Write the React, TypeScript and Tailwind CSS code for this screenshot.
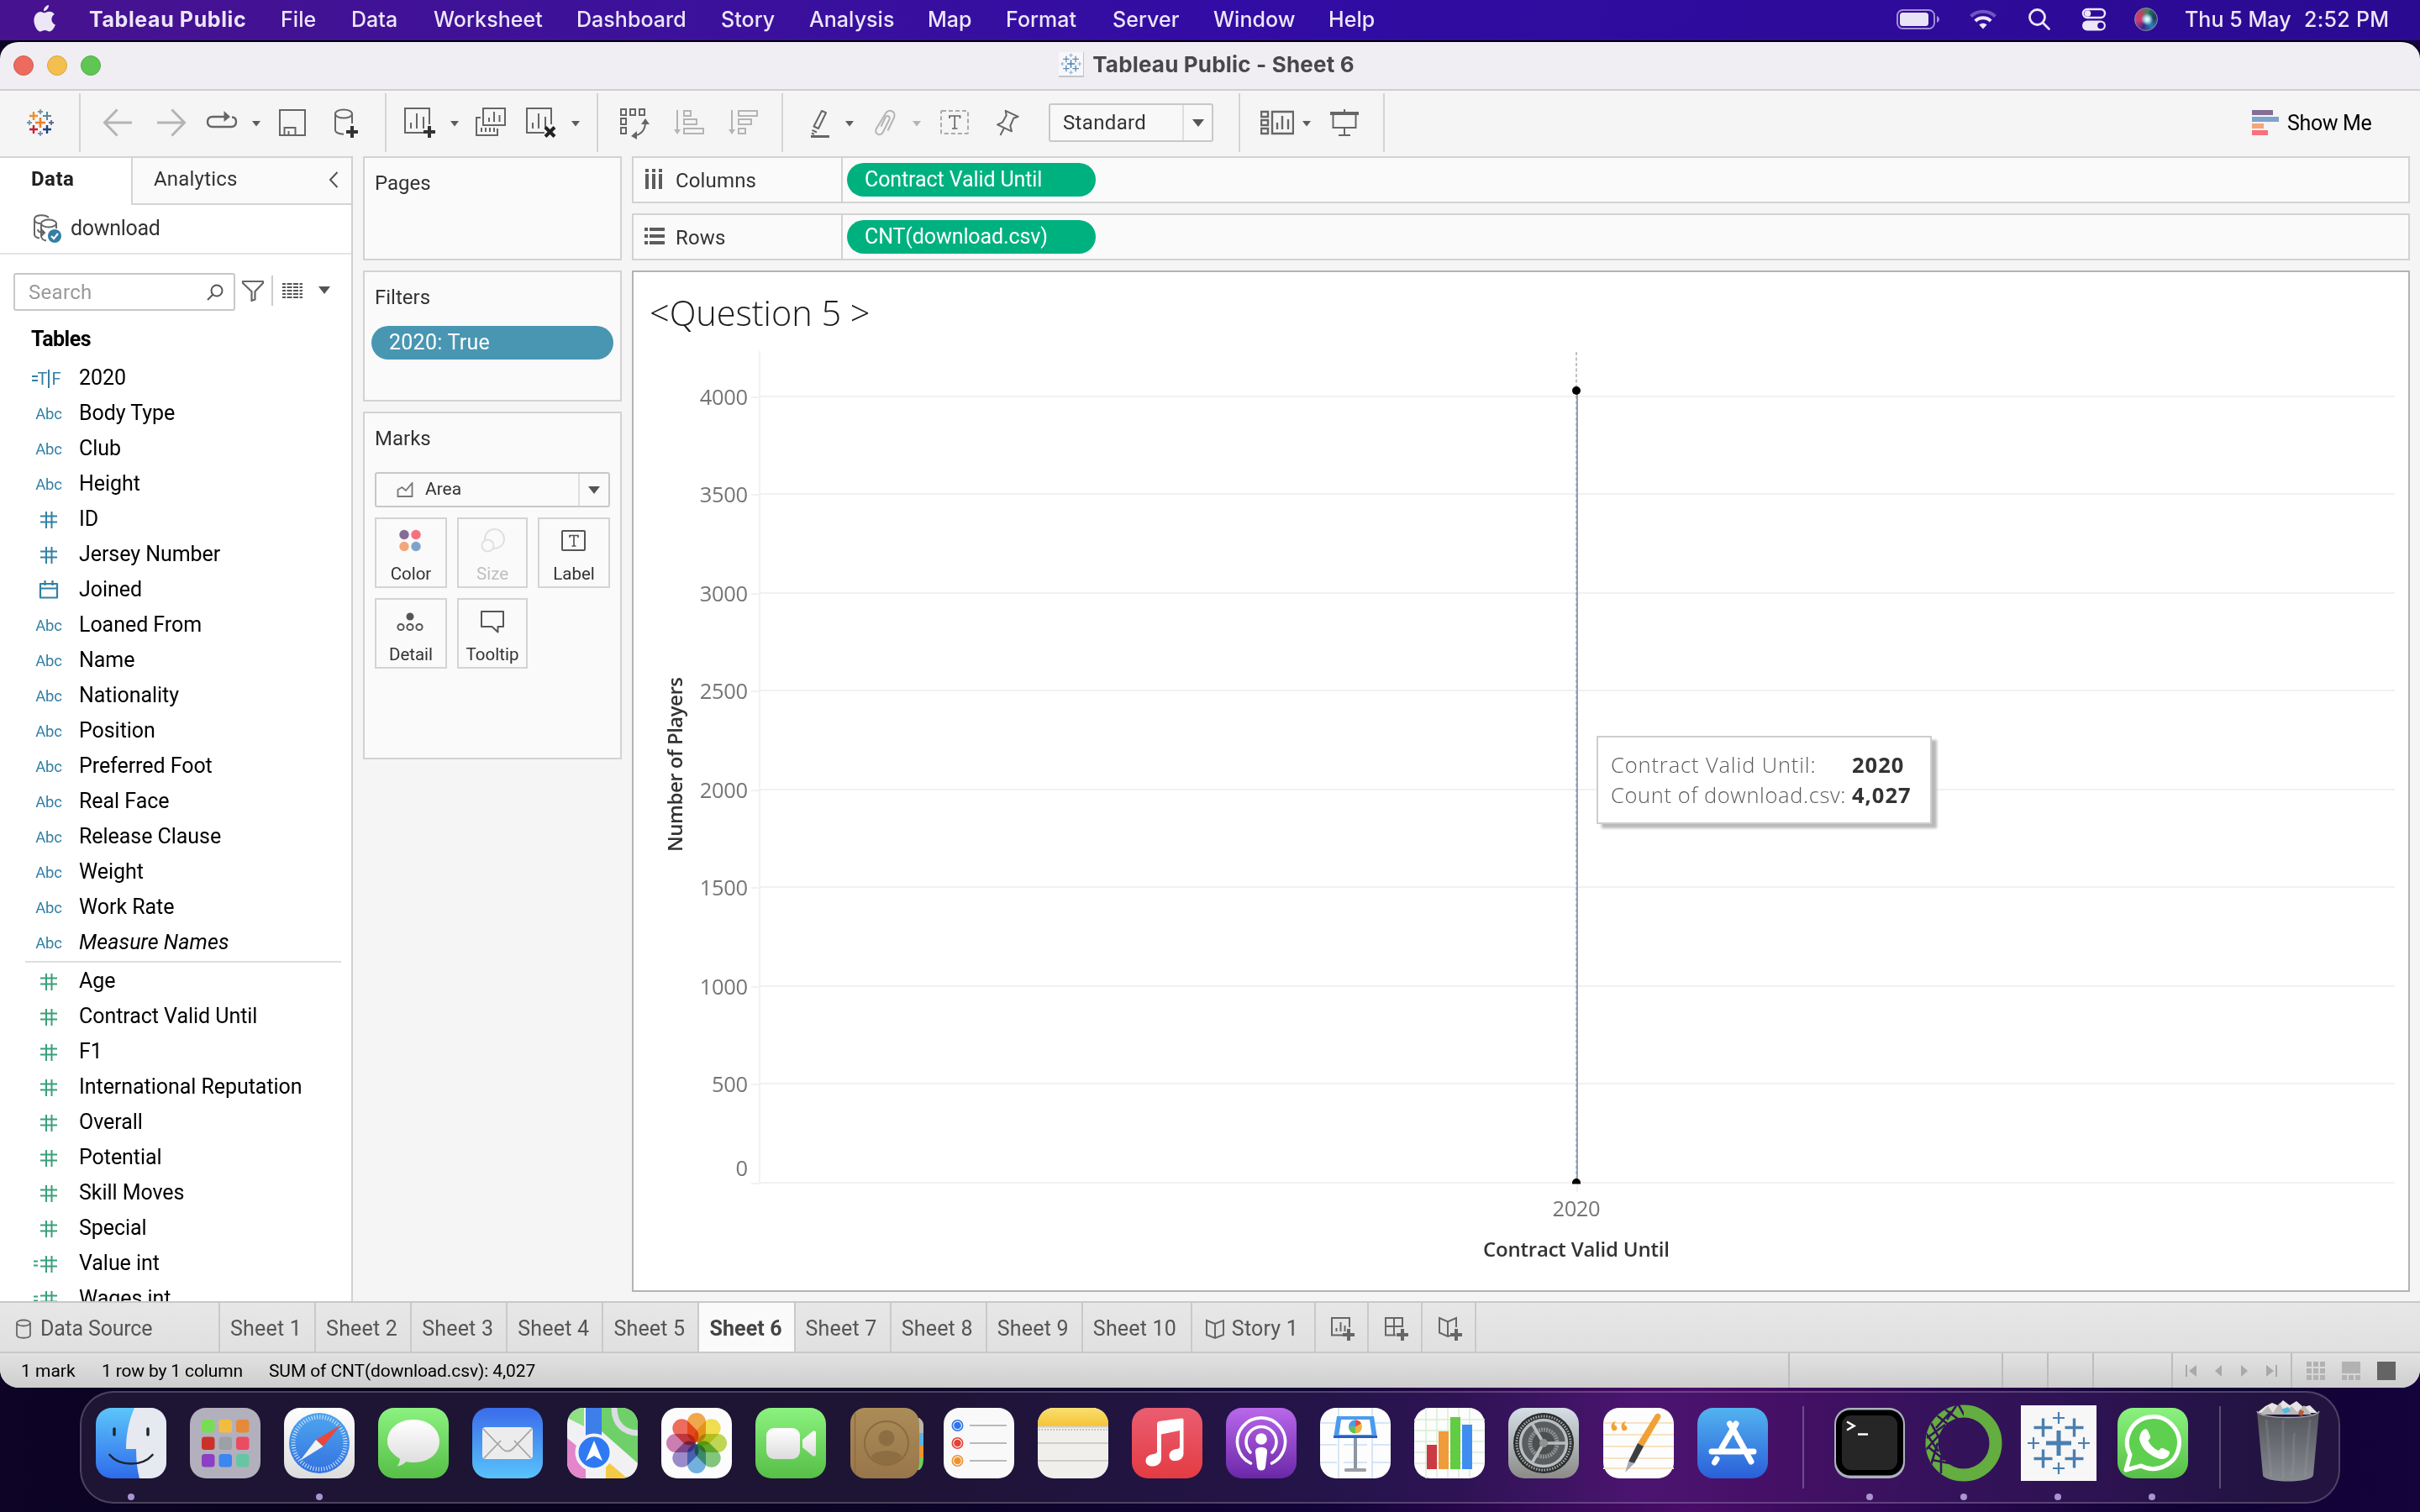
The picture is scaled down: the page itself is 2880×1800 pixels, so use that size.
import React from "react";

type IconProps = { className?: string; children: React.ReactNode };

/* 40×40 line icon used across the toolbar */
function Tool({ className = "", children }: IconProps) {
  return (
    <svg viewBox="0 0 40 40" className={"h-10 w-10 shrink-0 " + className} fill="none" stroke="#666" strokeWidth="2">
      {children}
    </svg>
  );
}

function Caret({ className = "", light = false }: { className?: string; light?: boolean }) {
  return (
    <svg viewBox="0 0 14 10" className={"mt-0.5 h-2.5 w-3.5 shrink-0 " + className}>
      <path d="M2 2h10L7 8.500z" fill={light ? "#b4b4b4" : "#5c5c5c"} />
    </svg>
  );
}

function Sep({ className = "" }: { className?: string }) {
  return <div className={"h-[70px] w-0.5 shrink-0 bg-[#d4d4d4] " + className} />;
}

function Plus({ x, y, r, w, c }: { x: number; y: number; r: number; w: number; c: string }) {
  return <path d={`M${x - r} ${y}h${2 * r}M${x} ${y - r}v${2 * r}`} stroke={c} strokeWidth={w} fill="none" />;
}

/* ---------------------------------------------------------------- menu bar */

const menus: [string, string][] = [
  ["File", "w-[84px]"],
  ["Data", "w-[98px]"],
  ["Worksheet", "w-[170px]"],
  ["Dashboard", "w-[172px]"],
  ["Story", "w-[105px]"],
  ["Analysis", "w-[141px]"],
  ["Map", "w-[93px]"],
  ["Format", "w-[127px]"],
  ["Server", "w-[120px]"],
  ["Window", "w-[137px]"],
  ["Help", "w-[60px]"],
];

function MenuBar() {
  return (
    <header className="flex h-12 items-center bg-gradient-to-r from-[#47128f] via-[#320ca4] to-[#2b0a92] pb-0.5 text-[25px] font-medium leading-none tracking-[0.05px] text-[#ece6f7]">
      <svg viewBox="0 0 26 32" className="ml-10 h-8 w-[26px] -translate-y-px" fill="#ece6f7">
        <path d="M18 0c.3 3.400-2.600 7-6 7.200C11.600 4 14.800.4 18 0zM12.900 9.300c1.400 0 3-1.600 5.900-1.600 2.300 0 4.700 1.200 6.100 3.400-5.300 3.200-4.300 10.300 1 12.400-1.500 4-4.100 8-6.900 8-2.200 0-2.900-1.400-5.600-1.400-2.600 0-3.600 1.400-5.600 1.400C4.500 31.500.4 24.400.4 18.300c0-6.200 3.800-10.400 7.900-10.400 2 0 3.500 1.400 4.600 1.400z" />
      </svg>
      <span className="ml-10 w-[228px] whitespace-nowrap font-bold tracking-[0.6px]">Tableau Public</span>
      {menus.map(([label, w]) => (
        <span key={label} className={w}>
          {label}
        </span>
      ))}
      <svg viewBox="0 0 52 24" className="ml-auto h-6 w-[52px]" fill="none">
        <rect x="1" y="1" width="44" height="22" rx="6.500" stroke="#a28fd6" strokeWidth="2" />
        <rect x="4" y="4" width="34" height="16" rx="3.500" fill="#e9e4f5" />
        <path d="M48 8c4 1.500 4 6.500 0 8z" fill="#a28fd6" />
      </svg>
      <svg viewBox="0 0 32 24" className="ml-[35px] h-6 w-8" fill="none" strokeWidth="4.200">
        <path d="M1.500 8.500C9.500.800 22.500.800 30.500 8.500" stroke="#6e55bf" />
        <path d="M6.800 14c5-5 13.400-5 18.400 0" stroke="#ece6f7" />
        <path d="M16 23.500l-4.600-5c2.600-2.300 6.600-2.300 9.200 0z" fill="#ece6f7" />
      </svg>
      <svg viewBox="0 0 28 28" className="ml-[37px] h-7 w-7" fill="none" stroke="#ece6f7" strokeWidth="2.800" strokeLinecap="round">
        <circle cx="11.500" cy="11.500" r="9" />
        <path d="M18.500 18.500l7 7" />
      </svg>
      <svg viewBox="0 0 30 28" className="ml-[36px] h-7 w-[30px]">
        <rect x="2" y="2" width="26" height="10" rx="5" fill="none" stroke="#ece6f7" strokeWidth="2.400" />
        <circle cx="7.500" cy="7" r="3.800" fill="#ece6f7" />
        <rect x="1" y="15.500" width="28" height="12" rx="6" fill="#ece6f7" />
        <circle cx="23" cy="21.500" r="3.800" fill="#2b0a92" />
      </svg>
      <span className="ml-[33px] h-[28px] w-[28px] rounded-full border border-[#8d8fa8] bg-[radial-gradient(circle_at_55%_50%,#ffffff_0,#a8e0ee_16%,transparent_38%),conic-gradient(from_20deg,#2f6f5e,#1c3a5c,#2d7fb4,#3a2a86,#d03a77,#b8475a,#2d8c66)]" />
      <span className="ml-[32px] w-[142px] whitespace-nowrap">Thu 5 May</span>
      <span className="w-[138px] whitespace-nowrap tracking-[0.3px]">2:52 PM</span>
    </header>
  );
}

/* --------------------------------------------------------------- title bar */

function TitleBar() {
  return (
    <div className="relative flex h-[58px] items-center justify-center border-b-2 border-[#cfced5] bg-[#f0eef3] pb-[3px]">
      <div className="absolute left-4 top-4 flex gap-4">
        <span className="h-6 w-6 rounded-full border border-[#d8584e] bg-[#ed6a5f]" />
        <span className="h-6 w-6 rounded-full border border-[#d9a441] bg-[#f5bf4f]" />
        <span className="h-6 w-6 rounded-full border border-[#51ad44] bg-[#61c554]" />
      </div>
      <svg viewBox="0 0 30 30" className="mr-2.5 h-[30px] w-[30px] border-b-2 border-r border-[#c4c4c8] bg-[#f8f8fa]">
        <Plus x={15} y={15} r={5} w={1.600} c="#4a7fb0" />
        {[
          [9, 9],
          [21, 9],
          [9, 21],
          [21, 21],
        ].map(([x, y]) => (
          <Plus key={`${x}${y}`} x={x} y={y} r={4} w={1.400} c="#5b8cb8" />
        ))}
        {[
          [15, 4],
          [15, 26],
          [4, 15],
          [26, 15],
        ].map(([x, y]) => (
          <Plus key={`${x}${y}`} x={x} y={y} r={2.500} w={1.200} c="#8fb0cf" />
        ))}
      </svg>
      <span className="mr-2 text-[26px] font-bold tracking-[0.18px] text-[#49474c]">Tableau Public - Sheet 6</span>
    </div>
  );
}

/* ----------------------------------------------------------------- toolbar */

function Toolbar() {
  return (
    <div className="flex h-[78px] shrink-0 items-center bg-[#f5f5f5] pb-0.5">
      <svg viewBox="0 0 40 40" className="ml-7 h-10 w-10 shrink-0">
        <Plus x={20} y={20} r={6} w={2.600} c="#eb8130" />
        <Plus x={12} y={12} r={5} w={2.400} c="#eb912c" />
        <Plus x={28} y={12} r={5} w={2} c="#59879b" />
        <Plus x={12} y={28} r={5} w={2.400} c="#c72035" />
        <Plus x={28} y={28} r={5} w={2.400} c="#1f457e" />
        <Plus x={20} y={7} r={3} w={1.800} c="#7099a6" />
        <Plus x={20} y={33} r={3} w={1.800} c="#8289b8" />
        <Plus x={7} y={20} r={3} w={1.800} c="#7099a6" />
        <Plus x={33} y={20} r={3} w={1.800} c="#5c6692" />
      </svg>
      <Sep className="ml-[26px]" />
      <Tool className="ml-6">
        <path d="M37 20H5M19.500 4.500L4.500 20l15 15.500" stroke="#b4b4b4" strokeWidth="3" />
      </Tool>
      <Tool className="ml-6">
        <path d="M3 20h32M20.500 4.500L35.500 20l-15 15.500" stroke="#b4b4b4" strokeWidth="3" />
      </Tool>
      <Tool className="ml-5">
        <path d="M13 13H9c-4 0-6 2.500-6 6s2 6 6 6h22c4 0 6-2.500 6-6s-2-5.500-5-5.500M13 13h14" strokeWidth="2.400" />
        <path d="M22.500 6l7.500 7-7.500 6z" fill="#666" stroke="none" />
      </Tool>
      <Caret className="ml-3.5" />
      <Tool className="ml-4">
        <path d="M5 5h30v30H5zM10.500 35V26h13v9M15.500 35v-5" />
      </Tool>
      <Tool className="ml-6">
        <ellipse cx="17" cy="9.500" rx="10" ry="5" />
        <path d="M7 9.500V29c0 2.500 4 4.500 10 4.800M27 9.500V21" />
        <path d="M27 24v14M20 31h14" stroke="#333" strokeWidth="4" />
      </Tool>
      <Sep className="ml-[26px]" />
      <Tool className="ml-5">
        <path d="M24 32H2V3h29v19M9 27v-7M16 27V9M24 27V13" />
        <path d="M31 24v14M24 31h14" stroke="#333" strokeWidth="4" />
      </Tool>
      <Caret className="ml-3.5" />
      <Tool className="ml-4">
        <path d="M11 3h26v20H11zM18 19v-5M24 19V7M30.500 19v-8M8 14H3v21h25v-8M9 31v-5M14 31v-5M19 31v-5M24 31v-5" />
      </Tool>
      <Tool className="ml-5">
        <path d="M24 32H3V3h29v19M10 27v-7M17 27V9M25 27V13" />
        <path d="M25 25.500l11 11M36 25.500l-11 11" stroke="#222" strokeWidth="4" />
      </Tool>
      <Caret className="ml-3.5" />
      <Sep className="ml-[18px]" />
      <Tool className="ml-[23px]">
        <path d="M4 4h6v7H4zM15 4h6v7h-6zM26 4h6v7h-6zM4 15h6v7H4zM4 26h6v7H4zM33 20c0 8-5 14.500-13 15.500" />
        <path d="M33 15l5 7H28zM16 36l7-6v10z" fill="#666" stroke="none" />
      </Tool>
      <Tool className="ml-[25px]">
        <g stroke="#b4b4b4">
          <path d="M6 5v26M14 6h8v6h-8zM14 16h15v6H14zM14 27h23v6H14z" />
          <path d="M2 28h8l-4 6z" fill="#b4b4b4" stroke="none" />
        </g>
      </Tool>
      <Tool className="ml-[25px]">
        <g stroke="#b4b4b4">
          <path d="M6 5v26M14 6h22v6H14zM14 16h15v6H14zM14 27h8v6h-8z" />
          <path d="M2 28h8l-4 6z" fill="#b4b4b4" stroke="none" />
        </g>
      </Tool>
      <Sep className="ml-[25px]" />
      <Tool className="ml-6">
        <path d="M22 6l5 2.200L18 27l-5.500-2.500zM10.500 28.800l5.500 2.700M10 32.500l3 1.400" strokeLinejoin="round" />
        <path d="M9 36.500h22" strokeWidth="3" />
      </Tool>
      <Caret className="ml-2" />
      <Tool className="ml-[15px]">
        <path d="M23.500 29.500L31 14c3-8-7-11-10-5L10 27c-3 7 5 10 8 4l7.500-15c1.500-4-3.500-5.500-5-2L15.500 24.500" stroke="#b4b4b4" />
      </Tool>
      <Caret className="ml-[11px]" light />
      <Tool className="ml-[18px]">
        <rect x="4" y="6" width="32" height="27" rx="1" strokeDasharray="5 3" stroke="#aaa" />
        <path d="M14 15v-3h12.500v3M20.200 12v15M17 27h6.500" strokeWidth="1.700" />
      </Tool>
      <Tool className="ml-6">
        <path d="M16.700 5.800l15 7-5.500 2L22.300 24l1.700 6.300-17-8 6-2.600 4.700-8.400zM15 26.300L10.500 35" strokeLinejoin="round" />
      </Tool>
      <div className="ml-7 flex h-[46px] w-[196px] shrink-0 items-center rounded-[3px] border-2 border-[#c8c8c8] bg-[#f8f8f8]">
        <span className="w-[157px] pl-[15px] text-[24px] tracking-[0.35px] text-[#333]">Standard</span>
        <span className="flex h-full flex-1 items-center justify-center border-l-2 border-[#dedede]">
          <svg viewBox="0 0 14 9" className="h-[9px] w-3.5">
            <path d="M0 0h14L7 9z" fill="#555" />
          </svg>
        </span>
      </div>
      <Sep className="ml-[30px]" />
      <Tool className="ml-6">
        <path d="M1 7h8v6H1zM1 17h8v6H1zM1 27h8v6H1zM14 7h25v26H14zM20 28v-8M26 28V12M33 28V16" strokeWidth="2.400" />
      </Tool>
      <Caret className="ml-2" />
      <Tool className="ml-[18px]">
        <path d="M3 9h34" strokeWidth="4" />
        <path d="M6.500 10v16h27V10M20 4v4M20 26v8M13 35h14" />
      </Tool>
      <Sep className="ml-[26px]" />
      <div className="ml-auto mr-[58px] flex items-center gap-2.5">
        <div className="flex w-8 flex-col gap-0.5">
          <span className="h-1.5 w-[25px] bg-[#866d96]" />
          <span className="h-1.5 w-8 bg-[#7fa3cb]" />
          <span className="h-1.5 w-[14px] bg-[#f4a67a]" />
          <span className="h-1.5 w-[19px] bg-[#f8707e]" />
        </div>
        <span className="w-[100px] whitespace-nowrap pt-0.5 text-[25px] tracking-[-0.35px] text-black">Show Me</span>
      </div>
    </div>
  );
}

/* ----------------------------------------------------------------- sidebar */

type Kind = "tf" | "abc" | "num" | "date" | "calc";

const dimensions: [string, Kind][] = [
  ["2020", "tf"],
  ["Body Type", "abc"],
  ["Club", "abc"],
  ["Height", "abc"],
  ["ID", "num"],
  ["Jersey Number", "num"],
  ["Joined", "date"],
  ["Loaned From", "abc"],
  ["Name", "abc"],
  ["Nationality", "abc"],
  ["Position", "abc"],
  ["Preferred Foot", "abc"],
  ["Real Face", "abc"],
  ["Release Clause", "abc"],
  ["Weight", "abc"],
  ["Work Rate", "abc"],
  ["Measure Names", "abc"],
];

const measures: [string, Kind][] = [
  ["Age", "num"],
  ["Contract Valid Until", "num"],
  ["F1", "num"],
  ["International Reputation", "num"],
  ["Overall", "num"],
  ["Potential", "num"],
  ["Skill Moves", "num"],
  ["Special", "num"],
  ["Value int", "calc"],
  ["Wages int", "calc"],
];

function FieldIcon({ kind }: { kind: Kind }) {
  if (kind === "abc") return <span className="pt-1 text-[18.500px] tracking-[-0.2px]">Abc</span>;
  if (kind === "tf")
    return (
      <span className="-ml-1.5 flex items-center pt-0.5 text-[20px] leading-none">
        <svg viewBox="0 0 7 10" className="h-2.5 w-[7px]" stroke="currentColor" strokeWidth="2">
          <path d="M0 2h7M0 7h7" />
        </svg>
        T<span className="ml-px mr-0.5 h-[22px] w-0.5 bg-current" />F
      </span>
    );
  if (kind === "date")
    return (
      <svg viewBox="0 0 24 24" className="h-6 w-6" fill="none" stroke="currentColor" strokeWidth="2.200">
        <path d="M2 5h20v16.500H2zM2 10.500h20M7.500 1v6M16.500 1v6" strokeLinejoin="round" />
      </svg>
    );
  return (
    <svg viewBox="0 0 40 24" className="h-6 w-10" fill="none" stroke="currentColor" strokeWidth="2">
      <path d="M10 8.500h20M10 15.500h20M17 3v20M23.500 3v20" />
      {kind === "calc" && <path d="M2 9.500h5M2 14.500h5" />}
    </svg>
  );
}

function Field({ name, kind, italic = false }: { name: string; kind: Kind; italic?: boolean }) {
  return (
    <li className="flex h-[42px] shrink-0 items-center">
      <span className="ml-8 flex w-[52px] justify-center">
        <FieldIcon kind={kind} />
      </span>
      <span className={"ml-2.5 whitespace-nowrap text-[25px] text-black " + (italic ? "italic tracking-[0.1px]" : "tracking-[-0.05px]")}>{name}</span>
    </li>
  );
}

function Sidebar() {
  return (
    <aside className="flex w-[420px] shrink-0 flex-col overflow-hidden border-r-2 border-[#d0d0d0] bg-white">
      <div className="flex h-[58px] shrink-0 border-t-2 border-[#d4d4d4] text-[24px]">
        <div className="w-[156px] pl-[37px] pt-[7px] font-bold tracking-[0.5px] text-[#222]">Data</div>
        <div className="flex flex-1 items-start justify-between border-b-2 border-l-2 border-[#d4d4d4] bg-[#fafafa] pl-[25px] pr-[15px] pt-[7px] tracking-[0.2px] text-[#333]">
          Analytics
          <svg viewBox="0 0 12 20" className="mt-[9px] h-5 w-3" fill="none" stroke="#555" strokeWidth="2">
            <path d="M10.500 1L2 10l8.500 9" />
          </svg>
        </div>
      </div>
      <div className="flex h-[59px] shrink-0 items-center border-b-2 border-[#e4e4e4] pb-0.5 pl-[38px]">
        <svg viewBox="0 0 36 36" className="h-9 w-9" fill="none" stroke="#666" strokeWidth="2">
          <path d="M20 5C16 1 3 1 3 7v18c0 2.500 3 4 6 4.500" />
          <path d="M3 8c1 3 4 4 7 4" />
          <ellipse cx="20" cy="12" rx="9" ry="4.500" fill="#fff" />
          <path d="M11 12v15c0 3 3 5 6 5.500M29 12v6" />
          <path d="M7 19c0 3 2 4 7 4m-2.500-3.500L15 23l-3.500 3.500" />
          <circle cx="27" cy="27" r="8" fill="#337ea4" stroke="none" />
          <path d="M23 27l3 3.200 5-6.200" stroke="#fff" strokeWidth="2.200" />
        </svg>
        <span className="ml-2.5 text-[25px] tracking-[-0.3px] text-[#333]">download</span>
      </div>
      <div className="flex shrink-0 items-center pl-4 pt-[22px]">
        <div className="flex h-[45px] w-[264px] items-center rounded-[3px] border-2 border-[#c8c8c8] pl-4 pr-3">
          <span className="text-[24px] tracking-[0.3px] text-[#999]">Search</span>
          <svg viewBox="0 0 20 20" className="ml-auto h-5 w-5" fill="none" stroke="#555" strokeWidth="2">
            <circle cx="12" cy="8" r="6.500" />
            <path d="M7.500 12.500L1 19" />
          </svg>
        </div>
        <svg viewBox="0 0 28 28" className="ml-[7px] h-7 w-7 -translate-y-0.5" fill="none" stroke="#666" strokeWidth="2.200" strokeLinejoin="round">
          <path d="M2 3h24v2L16.500 15v9.500l-4 1.500V15L2 5z" />
        </svg>
        <span className="ml-2 h-9 w-0.5 -translate-y-0.5 bg-[#ccc]" />
        <svg viewBox="0 0 24 20" className="ml-[11px] h-5 w-6 -translate-y-0.5" stroke="#555" strokeWidth="2.200">
          <path d="M0 2h24M0 6h24M0 10h24M0 14h24M0 18h24" strokeDasharray="4 1.500 6 1.500 6 1.500 6 0" />
        </svg>
        <svg viewBox="0 0 14 9" className="ml-[19px] h-[9px] w-3.5 -translate-y-0.5">
          <path d="M0 0h14L7 9z" fill="#555" />
        </svg>
      </div>
      <h2 className="flex h-[59px] shrink-0 items-center pl-[37px] pt-[8px] text-[25px] font-bold tracking-[-0.5px] text-black">Tables</h2>
      <ul className="flex shrink-0 flex-col text-[#3280a5]">
        {dimensions.map(([n, k]) => (
          <Field key={n} name={n} kind={k} italic={n === "Measure Names"} />
        ))}
      </ul>
      <div className="ml-[30px] mr-3 mt-px h-0.5 shrink-0 bg-[#dedede]" />
      <ul className="mt-px flex h-[403px] shrink-0 flex-col overflow-hidden text-[#3aa079]">
        {measures.map(([n, k]) => (
          <Field key={n} name={n} kind={k} />
        ))}
      </ul>
    </aside>
  );
}

/* ------------------------------------------------------------- shelf cards */

function Card({ title, className, children }: { title: string; className: string; children?: React.ReactNode }) {
  return (
    <section className={"shrink-0 border-2 border-[#d2d2d2] bg-[#fafafa] text-[#333] " + className}>
      <h3 className="px-3 text-[24px] leading-[30px]">{title}</h3>
      {children}
    </section>
  );
}

function MarkButton({ label, dim = false, children }: { label: string; dim?: boolean; children: React.ReactNode }) {
  return (
    <div
      className={
        "flex h-[84px] flex-col items-center border-2 border-[#d4d4d4] pt-2.5 text-[20.500px] leading-6 " + (dim ? "text-[#bfbfbf]" : "text-[#333]")
      }
    >
      <svg viewBox="0 0 36 32" className="mb-[11px] h-8 w-9 shrink-0" fill="none" stroke={dim ? "#e0e0e0" : "#555"} strokeWidth="2">
        {children}
      </svg>
      {label}
    </div>
  );
}

function Cards() {
  return (
    <div className="ml-3 flex w-[308px] shrink-0 flex-col">
      <Card title="Pages" className="h-[124px] pt-[15px]" />
      <Card title="Filters" className="mt-3 h-[156px] pt-[15px]">
        <div className="mx-2 mt-[19px] flex h-10 items-center rounded-full bg-[#4996b2] pl-[21px] text-[25px] tracking-[0.25px] text-white">2020: True</div>
      </Card>
      <Card title="Marks" className="mt-3 h-[414px] pt-[15px]">
        <div className="mx-3 mt-[25px] flex h-[42px] items-center rounded-[3px] border-2 border-[#c8c8c8]">
          <svg viewBox="0 0 20 18" className="ml-[24px] h-[18px] w-5" fill="none" stroke="#777" strokeWidth="1.800">
            <path d="M1.500 17V9l5-3 4.500 4 7.500-9v16z" />
          </svg>
          <span className="ml-[14px] text-[21px]">Area</span>
          <span className="ml-auto flex h-full w-9 items-center justify-center border-l-2 border-[#dedede]">
            <svg viewBox="0 0 14 9" className="h-[9px] w-3.5">
              <path d="M0 0h14L7 9z" fill="#555" />
            </svg>
          </span>
        </div>
        <div className="mx-3 mt-3 grid grid-cols-[86px_84px_86px] gap-3">
          <MarkButton label="Color">
            <g stroke="none">
              <circle cx="10" cy="8.500" r="5.700" fill="#866d96" />
              <circle cx="24" cy="8.500" r="5.700" fill="#f8707e" />
              <circle cx="10" cy="22.500" r="5.700" fill="#f4a67a" />
              <circle cx="24" cy="22.500" r="5.700" fill="#7fa3cb" />
            </g>
          </MarkButton>
          <MarkButton label="Size" dim>
            <circle cx="20.500" cy="13.500" r="11.500" />
            <circle cx="12.500" cy="21.500" r="7" fill="#fafafa" />
          </MarkButton>
          <MarkButton label="Label">
            <rect x="4" y="4" width="27" height="23" rx="1" />
            <path d="M13 12v-2.500h10V12M18 10v12M15.500 22h5" strokeWidth="1.700" />
          </MarkButton>
          <MarkButton label="Detail">
            <circle cx="17" cy="10" r="4.500" fill="#555" stroke="none" />
            <circle cx="6" cy="22.500" r="3.600" />
            <circle cx="17" cy="22.500" r="3.600" />
            <circle cx="28" cy="22.500" r="3.600" />
          </MarkButton>
          <MarkButton label="Tooltip">
            <path d="M5 4h26v18h-6.500v6.500L17.500 22H5z" strokeLinejoin="round" />
          </MarkButton>
        </div>
      </Card>
    </div>
  );
}

function Shelf({ label, pill, icon, className = "" }: { label: string; pill: string; icon: React.ReactNode; className?: string }) {
  return (
    <div className={"flex h-14 shrink-0 items-center border-2 border-[#d2d2d2] bg-[#fafafa] " + className}>
      <div className="flex h-full w-[249px] items-center border-r-2 border-[#d2d2d2] pl-[13px] pt-px text-[24px] tracking-[0.15px] text-[#333]">
        <svg viewBox="0 0 24 24" className="mr-[13px] h-6 w-6 -translate-y-0.5" fill="#5c5c5c">
          {icon}
        </svg>
        {label}
      </div>
      <div className="ml-[5px] flex h-10 w-[296px] items-center rounded-full bg-[#00b180] pl-[21px] text-[25px] tracking-[-0.1px] text-white">{pill}</div>
    </div>
  );
}

/* ------------------------------------------------------------------- chart */

const yTicks: [string, number][] = [
  ["4000", 148],
  ["3500", 264],
  ["3000", 382],
  ["2500", 498],
  ["2000", 616],
  ["1500", 732],
  ["1000", 850],
  ["500", 966],
];

function Viz() {
  return (
    <div className="relative mt-3 h-[1216px] shrink-0 border-2 border-[#b3b3b3] bg-white font-['Open_Sans',sans-serif]">
      <h1 className="absolute left-[19px] top-[18px] whitespace-nowrap text-[41.500px] font-light leading-[60px] tracking-[-0.05px] text-[#1c1c1c]">{"<Question 5 >"}</h1>
      <svg viewBox="0 0 2112 1212" className="h-[1212px] w-[2112px]" fill="none">
        <path d="M150 94V1084" stroke="#f1f1f1" strokeWidth="2" />
        {yTicks.map(([t, y]) => (
          <g key={t}>
            <path d={`M150 ${y}H2096M140 ${y + 1}h10`} stroke="#f1f1f1" strokeWidth="2" />
            <text x="136" y={y + 10} textAnchor="end" fontSize="25.500" fill="#757575" textLength={t.length * 14.300}>
              {t}
            </text>
          </g>
        ))}
        <path d="M140 1085h10M150 1084H2096M1123 1085v10" stroke="#f1f1f1" strokeWidth="2" />
        <text x="136" y="1076" textAnchor="end" fontSize="25.500" fill="#757575">
          0
        </text>
        <path d="M1123 142V1083" stroke="#86a8cf" strokeWidth="2" />
        <path d="M1122 95V1083" stroke="#8a8a8a" strokeOpacity=".7" strokeWidth="1.500" strokeDasharray="4 2.500" />
        <circle cx="1122" cy="141" r="5" fill="#000" />
        <path d="M1117 1084a5 5 0 0 1 10 0v1.500h-10z" fill="#000" />
        <text x="1122" y="1124" textAnchor="middle" fontSize="25.500" fill="#757575" textLength="57">
          2020
        </text>
        <text x="1122" y="1172" textAnchor="middle" fontSize="24" fill="#333" textLength="222" className="font-semibold">
          Contract Valid Until
        </text>
        <text transform="translate(58 586) rotate(-90)" textAnchor="middle" fontSize="24" fill="#333" textLength="208" className="font-semibold">
          Number of Players
        </text>
      </svg>
      <div className="absolute left-[1146px] top-[552px] h-[105px] w-[399px] border-2 border-[#cdcdcd] bg-white pl-[15px] pt-[14px] text-[25.500px] leading-[36px] shadow-[6px_5px_3px_#b9b9b9]">
        <div className="flex">
          <span className="w-[287px] whitespace-nowrap font-light tracking-[0.87px] text-[#5c5c5c]">Contract Valid Until:</span>
          <b className="tracking-[1px] text-[#333]">2020</b>
        </div>
        <div className="flex">
          <span className="w-[287px] whitespace-nowrap font-light tracking-[0.63px] text-[#5c5c5c]">Count of download.csv:</span>
          <b className="tracking-[1px] text-[#333]">4,027</b>
        </div>
      </div>
    </div>
  );
}

/* -------------------------------------------------------------- sheet tabs */

function BookIcon({ className = "" }: { className?: string }) {
  return (
    <svg viewBox="0 0 24 26" className={"h-[26px] w-6 " + className} fill="none" stroke="#666" strokeWidth="2">
      <path d="M2 3l10 4 10-4v17l-10 4-10-4zM12 7v17" />
    </svg>
  );
}

function NewTab({ className, children }: { className: string; children: React.ReactNode }) {
  return (
    <div className={"flex items-center justify-center border-r-2 border-[#c9c9c9] pl-1 pt-[3px] " + className}>
      <svg viewBox="0 0 30 30" className="h-[30px] w-[30px]" fill="none" stroke="#666" strokeWidth="2">
        {children}
        <path d="M22 15v14M15 22h14" strokeWidth="4" />
      </svg>
    </div>
  );
}

const sheets = [1, 2, 3, 4, 5, 6, 7, 8, 9];

function SheetTabs() {
  return (
    <div className="flex h-[62px] shrink-0 border-b-2 border-t-2 border-[#c8c8c8] bg-gradient-to-b from-[#e7e7e7] to-[#e0e0e0] text-[25px] tracking-[0.2px] text-[#555]">
      <div className="flex w-[262px] items-center border-r-2 border-[#c9c9c9] pl-[18px] pt-[3px]">
        <svg viewBox="0 0 20 24" className="h-6 w-5" fill="none" stroke="#666" strokeWidth="1.800">
          <ellipse cx="10" cy="5" rx="8" ry="3.500" />
          <path d="M2 5v14c0 5 16 5 16 0V5" />
        </svg>
        <span className="ml-[10px] tracking-[-0.2px]">Data Source</span>
      </div>
      {sheets.map((n) => (
        <div
          key={n}
          className={
            "flex w-[114.100px] items-center whitespace-nowrap border-r-2 border-[#c9c9c9] pl-3 pt-[3px] " +
            (n === 6 ? "bg-[#fafafa] font-bold tracking-[0.1px] text-[#444]" : "")
          }
        >
          Sheet {n}
        </div>
      ))}
      <div className="flex w-[130px] items-center border-r-2 border-[#c9c9c9] pl-3 pt-[3px]">Sheet 10</div>
      <div className="flex w-[147px] items-center border-r-2 border-[#c9c9c9] pl-[15px] pt-[3px]">
        <BookIcon />
        <span className="ml-2 whitespace-nowrap">Story 1</span>
      </div>
      <NewTab className="w-[63px]">
        <path d="M16 22.500H2V2h21v11M7.500 18v-4M12.500 18V7M17.500 18v-7" />
      </NewTab>
      <NewTab className="w-16">
        <path d="M14 22.500H2V2h20v11M2 12h20M12 2v20" />
      </NewTab>
      <NewTab className="w-16">
        <path d="M15 23l-3 1-10-4.500V2l10 4.500L22 2v11M12 6.500V24" />
      </NewTab>
    </div>
  );
}

function StatusBar() {
  return (
    <div className="flex h-[41px] shrink-0 items-stretch bg-gradient-to-b from-[#e2e2e2] to-[#cecece] text-[21px] leading-[42px] text-black">
      <span className="ml-[25px] w-[96px]">1 mark</span>
      <span className="w-[199px] tracking-[-0.15px]">1 row by 1 column</span>
      <span className="w-[1808px] tracking-[-0.1px]">SUM of CNT(download.csv): 4,027</span>
      <span className="w-[254px] border-l-2 border-[#bdbdbd]" />
      <span className="w-[54px] border-l-2 border-[#bdbdbd]" />
      <span className="w-[54px] border-l-2 border-[#bdbdbd]" />
      <span className="w-[94px] border-l-2 border-[#bdbdbd]" />
      <span className="flex w-[142px] items-center justify-between border-l-2 border-[#bdbdbd] pl-[15px] pr-[16px]">
        <svg viewBox="0 0 14 14" className="h-3.5 w-3.5" fill="#a9a9a9">
          <path d="M0 0h2v14H0zM13 0v14L4 7z" />
        </svg>
        <svg viewBox="0 0 10 14" className="h-3.5 w-2.5" fill="#a9a9a9">
          <path d="M9 0v14L1 7z" />
        </svg>
        <svg viewBox="0 0 10 14" className="h-3.5 w-2.5" fill="#a9a9a9">
          <path d="M1 0v14l8-7z" />
        </svg>
        <svg viewBox="0 0 14 14" className="h-3.5 w-3.5" fill="#a9a9a9">
          <path d="M12 0h2v14h-2zM1 0v14l9-7z" />
        </svg>
      </span>
      <span className="flex flex-1 items-center gap-5 border-l-2 border-[#bdbdbd] pl-[17px]">
        <svg viewBox="0 0 22 22" className="h-[22px] w-[22px]" fill="#b2b2b2">
          <path d="M0 0h6v6H0zM8 0h6v6H8zM16 0h6v6h-6zM0 8h6v6H0zM8 8h6v6H8zM16 8h6v6h-6zM0 16h6v6H0zM8 16h6v6H8zM16 16h6v6h-6z" />
        </svg>
        <svg viewBox="0 0 22 22" className="h-[22px] w-[22px]" fill="#b2b2b2">
          <path d="M0 0h22v14H0zM0 16h6v6H0zM8 16h6v6H8zM16 16h6v6h-6z" />
        </svg>
        <span className="h-[22px] w-[22px] bg-[#646464]" />
      </span>
    </div>
  );
}

/* -------------------------------------------------------------------- dock */

function Grad({ id, a, b }: { id: string; a: string; b: string }) {
  return (
    <linearGradient id={id} x1="0" y1="0" x2="0" y2="1">
      <stop offset="0" stopColor={a} />
      <stop offset="1" stopColor={b} />
    </linearGradient>
  );
}

function App84({ dot = false, children }: { dot?: boolean; children: React.ReactNode }) {
  return (
    <div className="relative flex h-full w-[112.100px] shrink-0 justify-center pt-[18px]">
      <svg viewBox="0 0 84 84" className="h-[84px] w-[84px] overflow-visible">
        {children}
      </svg>
      {dot && <span className="absolute bottom-[2px] left-[52px] h-2 w-2 rounded-full bg-[#a994cf]" />}
    </div>
  );
}

function Tile({ fill }: { fill: string }) {
  return <rect width="84" height="84" rx="19" fill={fill} />;
}

const petals: [number, string][] = [
  [0, "#f29a2e"],
  [45, "#f0dc32"],
  [90, "#b4d337"],
  [135, "#6dbf6a"],
  [180, "#5aa5dc"],
  [225, "#8a79c4"],
  [270, "#c76aa5"],
  [315, "#ee5340"],
];

const pads: [number, number, string][] = [
  [14, 14, "#77dd55"],
  [34.500, 14, "#f2bd3f"],
  [55, 14, "#e58a38"],
  [14, 34.500, "#cc3128"],
  [34.500, 34.500, "#9aa0a6"],
  [55, 34.500, "#ea4c62"],
  [14, 55, "#8c3fc4"],
  [34.500, 55, "#3b86f0"],
  [55, 55, "#66c6a4"],
];

function Dock() {
  return (
    <nav className="mx-[95px] mt-1 flex h-[134px] rounded-[40px] border-2 border-white/20 bg-[linear-gradient(90deg,#1e1434_0%,#1e1434_35%,#241449_55%,#2e1354_61%,#4b1470_69%,#471068_74%,#34125a_83%,#2c1350_90%,#221341_97%)] px-[3px]">
      <svg className="absolute h-0 w-0">
        <defs>
          <Grad id="blue" a="#5cc5fa" b="#2f6bea" />
          <Grad id="compass" a="#4fa6ee" b="#3372e0" />
          <Grad id="white" a="#ffffff" b="#dcdcdc" />
          <Grad id="green" a="#8bf27f" b="#56bf47" />
          <Grad id="mail" a="#3a6cea" b="#59c3fb" />
          <Grad id="tan" a="#ab8c57" b="#99764a" />
          <Grad id="note" a="#f9df70" b="#f5c335" />
          <Grad id="music" a="#ea5e71" b="#e43b42" />
          <Grad id="pod" a="#b968ea" b="#6b27a8" />
          <Grad id="steel" a="#d5dfe6" b="#8b8b88" />
          <Grad id="store" a="#52b3f0" b="#2a5fd9" />
          <Grad id="bin" a="#55585c" b="#8b8f93" />
          <clipPath id="tile">
            <rect width="84" height="84" rx="19" />
          </clipPath>
          <clipPath id="ring">
            <path d="M42-4A46 46 0 0 0 20 82L28 68A30 30 0 0 1 42 12z" />
          </clipPath>
        </defs>
      </svg>

      {/* Finder */}
      <App84 dot>
        <Tile fill="url(#blue)" />
        <g clipPath="url(#tile)">
          <path d="M46 0c-7 16-10 32-10 49h12c0 12 1 24 4 35h34V0z" fill="#e6e9f0" />
        </g>
        <path d="M22 25v7M62 25v7" stroke="#1b2430" strokeWidth="3.400" strokeLinecap="round" />
        <path d="M16.500 56c12 14 39 14 51 0" stroke="#1b2430" strokeWidth="2.600" fill="none" strokeLinecap="round" />
      </App84>
      {/* Launchpad */}
      <App84>
        <Tile fill="#b3b0bd" />
        {pads.map(([x, y, c]) => (
          <rect key={`${x}-${y}`} x={x} y={y} width="15.500" height="15.500" rx="3.500" fill={c} />
        ))}
      </App84>
      {/* Safari */}
      <App84 dot>
        <Tile fill="url(#white)" />
        <circle cx="42" cy="42" r="36" fill="url(#compass)" />
        <circle cx="42" cy="42" r="31" fill="none" stroke="#fff" strokeWidth="5" strokeDasharray="1 2.250" opacity=".8" />
        <path d="M67.500 20.500L46.500 46 38 38z" fill="#e8483c" />
        <path d="M19 63l19-25 8.500 8z" fill="#f2f2f2" />
      </App84>
      {/* Messages */}
      <App84>
        <Tile fill="url(#green)" />
        <path d="M42 14c18 0 31 11 31 26S60 65 42 65c-3 0-6-.3-8.500-1-3 3-6.500 5-11 5.500 2.500-3 3.500-6 3.300-9C17 55 11 48.500 11 40c0-15 13-26 31-26z" fill="url(#white)" />
      </App84>
      {/* Mail */}
      <App84>
        <Tile fill="url(#mail)" />
        <rect x="12" y="23" width="60" height="38" rx="4" fill="#ececec" />
        <path d="M14 60l20-21M70 60L50 39M13 25l23 24c3.500 3.500 8.500 3.500 12 0l23-24" stroke="#a5a5a5" strokeWidth="1.800" fill="none" />
      </App84>
      {/* Maps */}
      <App84>
        <Tile fill="#f1f1f4" />
        <g clipPath="url(#tile)">
          <path d="M0 0h20v22L0 12z" fill="#8fdf85" />
          <path d="M41 0h43v66L41 28z" fill="#6fd069" />
          <path d="M56 0c0 20 12 30 30 30" stroke="#dcdce4" strokeWidth="7" fill="none" />
          <path d="M0 36l22 18v30H0z" fill="#e386cb" />
          <path d="M46 62l28 24H46z" fill="#f3cb45" />
          <path d="M22 0h19v40H22z" fill="#3d7ee8" />
        </g>
        <circle cx="32" cy="53" r="20.500" fill="#2f7af2" stroke="#f3f3f6" strokeWidth="4" />
        <path d="M32 39l10 24-10-6-10 6z" fill="#fff" />
      </App84>
      {/* Photos */}
      <App84>
        <Tile fill="#fcfcfc" />
        {petals.map(([r, c]) => (
          <rect key={r} x="31" y="6" width="22" height="35" rx="11" fill={c} opacity=".85" transform={`rotate(${r} 42 42)`} className="mix-blend-multiply" />
        ))}
      </App84>
      {/* FaceTime */}
      <App84>
        <Tile fill="url(#green)" />
        <rect x="13" y="24" width="40" height="37" rx="9" fill="url(#white)" />
        <path d="M56 38l12-10c2-1.500 4-.5 4 2v25c0 2.500-2 3.500-4 2L56 47z" fill="url(#white)" />
      </App84>
      {/* Contacts */}
      <App84>
        <path d="M70 12h13c3 2 5 5 5 8v10H70z" fill="#b9b6ae" />
        <path d="M74 30h14v15H74z" fill="#5bb3e4" />
        <path d="M74 45h14v14H74z" fill="#ee9330" />
        <path d="M74 59h14c0 7-1 12-5 15h-9z" fill="#6bcf5c" />
        <rect x="1" width="82" height="84" rx="18" fill="url(#tan)" />
        <path d="M6.500 6v72" stroke="#8d6c41" strokeWidth="1.500" />
        <circle cx="44" cy="42" r="26" fill="none" stroke="#8a6a40" strokeWidth="2" />
        <circle cx="44" cy="36" r="9.500" fill="#8d6d42" />
        <path d="M26 58c3-9 33-9 36 0-8 13-28 13-36 0z" fill="#8d6d42" />
      </App84>
      {/* Reminders */}
      <App84>
        <Tile fill="#f9f9f9" />
        {(
          [
            [21, "#2f74ea"],
            [42, "#e24338"],
            [63, "#ee9330"],
          ] as [number, string][]
        ).map(([y, c]) => (
          <g key={y}>
            <circle cx="16.500" cy={y} r="6.200" fill="none" stroke={c} strokeWidth="1.600" />
            <circle cx="16.500" cy={y} r="4.300" fill={c} />
            <path d={`M31 ${y}h44`} stroke="#b9b9bd" strokeWidth="2" />
          </g>
        ))}
      </App84>
      {/* Notes */}
      <App84>
        <Tile fill="#f0efec" />
        <g clipPath="url(#tile)">
          <rect width="84" height="22" fill="url(#note)" />
          <path d="M0 22.500h84M0 42h84M0 63h84" stroke="#cfcecb" strokeWidth="2" />
          <path d="M1 26h84" stroke="#b9b8b4" strokeWidth="2" strokeDasharray="1.500 2" />
        </g>
      </App84>
      {/* Music */}
      <App84>
        <Tile fill="url(#music)" />
        <path d="M30 19c0-1.500 1-2.500 2.500-3L59 12.500c1.500 0 2.500.5 2.500 2V54c0 6-4 8.500-9 9-5 .5-8-2-8-6 0-5 4-7.500 9-8 2-.2 3.500-1 3.500-3V27l-22 4.500V60c0 6-4 9-9.500 9.500-5 .5-9-2-9-6.500 0-4.500 4-7 8.500-7.700 3-.5 5-1 5-3.800z" fill="#fff" />
      </App84>
      {/* Podcasts */}
      <App84>
        <Tile fill="url(#pod)" />
        <g fill="none" stroke="#fff" strokeWidth="3.600" strokeLinecap="round">
          <path d="M29.500 66a28.500 28.500 0 1 1 25 0" />
          <path d="M29 53a18 18 0 1 1 26 0" />
        </g>
        <circle cx="42" cy="37" r="6.800" fill="#fff" />
        <path d="M42 47c5 0 7.500 2 7 6l-2 17c-.4 3-2 4.500-5 4.500s-4.600-1.500-5-4.500l-2-17c-.5-4 2-6 7-6z" fill="#fff" />
      </App84>
      {/* Keynote */}
      <App84>
        <Tile fill="#fdfdfd" />
        <path d="M0 18h84M0 44h20M28 44h28M62 44h22M0 65h20M28 65h28M62 65h22M22 0v84M62 0v84" stroke="#c9def5" strokeWidth="1.500" />
        <path d="M42 32v42" stroke="#8d97a3" strokeWidth="4" />
        <rect x="29" y="72" width="26" height="4" rx="1.500" fill="#9aa0a8" />
        <path d="M20 10h44l4 26H16z" fill="#4a9bee" />
        <path d="M16 33h52v3H16z" fill="#285fc4" />
        <path d="M25 14h34l2.500 18h-39z" fill="#fff" />
        <circle cx="42" cy="22.500" r="8" fill="#f0b33c" />
        <path d="M42 22.500v8a8 8 0 0 1-8-8z" fill="#5cc45c" />
        <path d="M42 22.500v-8a8 8 0 0 0-8 8z" fill="#4a9bee" />
        <path d="M42 22.500v-8a8 8 0 0 1 7 4z" fill="#e04d48" />
      </App84>
      {/* Numbers */}
      <App84>
        <Tile fill="#fdfdfd" />
        <path d="M0 14h84M0 27h84M0 40h84M0 53h84M0 66h84M14 0v84M27 0v84M40 0v84M53 0v84M66 0v84" stroke="#d6eed2" strokeWidth="1.500" />
        <path d="M15 44h12v29H15z" fill="#cb3a44" />
        <path d="M29 28h12v45H29z" fill="#ee9c3c" />
        <path d="M43 11h12v62H43z" fill="#62cc42" />
        <path d="M57 20h12v53H57z" fill="#3f8df0" />
      </App84>
      {/* System Preferences */}
      <App84>
        <Tile fill="url(#steel)" />
        <circle cx="42" cy="42" r="36" fill="#2b2d2e" />
        <circle cx="42" cy="42" r="32" fill="none" stroke="#9ea3a5" strokeWidth="3" strokeDasharray="1.700 1.500" />
        <circle cx="42" cy="42" r="27.500" fill="#5a5d5f" stroke="#b9bdbf" strokeWidth="3.500" />
        <circle cx="42" cy="42" r="16" fill="#4c4f50" stroke="#8f9394" strokeWidth="5" strokeDasharray="2 1" />
        <path d="M42 42h27M42 42L28.500 19M42 42L28.500 65" stroke="#b9bdbf" strokeWidth="3.600" />
        <circle cx="42" cy="42" r="5" fill="#8f9394" />
      </App84>
      {/* Pages */}
      <App84>
        <Tile fill="#fdfdfd" />
        <path d="M0 18h84M0 32h84M0 46h84M0 60h84M0 72h84" stroke="#f8e3c4" strokeWidth="2" />
        <path d="M11 27c-3-6-1-10 4-11-2 2-2 4-1 5 4 1 3 8-3 6zM23 27c-3-6-1-10 4-11-2 2-2 4-1 5 4 1 3 8-3 6z" fill="#f0a136" />
        <path d="M62 8c3-3 8 0 6 4L48 46l-7-4z" fill="#f0a136" />
        <path d="M41 42l7 4-11 20-7-2z" fill="#3c3f42" />
        <path d="M30 64l7 2-11 11z" fill="#a4abb0" />
      </App84>
      {/* App Store */}
      <App84>
        <Tile fill="url(#store)" />
        <g stroke="#fff" strokeWidth="7" strokeLinecap="round">
          <path d="M46 19L29 48M38.500 19l8 13M48 35l16 29M17 52h36M61 52h6M23 61l-2.500 4" />
        </g>
      </App84>

      <span className="ml-[27px] mr-[22px] mt-4 h-[98px] w-0.5 bg-white/25" />

      {/* Terminal */}
      <App84 dot>
        <Tile fill="#aab4bb" />
        <rect x="2" y="2.500" width="80" height="78" rx="17" fill="#000" />
        <rect x="9" y="9" width="66" height="65" rx="11" fill="#262626" />
        <path d="M15 16.500l8.500 5-8.500 5M28 31.500h12" stroke="#fff" strokeWidth="2.600" fill="none" />
      </App84>
      {/* Anaconda */}
      <App84 dot>
        <circle cx="42" cy="42" r="38" fill="none" stroke="#64ad40" strokeWidth="15" />
        <g stroke="#36125c" strokeWidth="2.600" fill="none" clipPath="url(#ring)">
          <path d="M35-5l10 18M20 2l16 12M22 14L34-4M10 9l15 12M9 24L27 4M3 18l11 20M-2 36l22-16M-3 30l15 22M-3 50l16-18M-1 46l20 16M3 68l8-26M4 62l21 4M15 78l0-22" />
        </g>
      </App84>
      {/* Tableau */}
      <App84 dot>
        <rect x="-2" y="-3" width="90" height="90" fill="#f7f7f8" />
        <g transform="translate(1 0)">
          <Plus x={42} y={42} r={15} w={5} c="#4a7fb0" />
          {[
            [23.500, 23.500],
            [60.500, 23.500],
            [23.500, 60.500],
            [60.500, 60.500],
          ].map(([x, y]) => (
            <Plus key={`${x}${y}`} x={x} y={y} r={11} w={3.400} c="#4a7fb0" />
          ))}
          {[
            [42, 12],
            [42, 72],
            [12, 42],
            [72, 42],
          ].map(([x, y]) => (
            <Plus key={`${x}${y}`} x={x} y={y} r={7} w={2.200} c="#4a7fb0" />
          ))}
        </g>
      </App84>
      {/* WhatsApp */}
      <App84 dot>
        <g transform="translate(1 0)">
          <Tile fill="url(#green)" />
          <path d="M10 74l5-18A31 31 0 1 1 28 69z" fill="#5fcf4f" stroke="#fff" strokeWidth="5" strokeLinejoin="round" />
          <path d="M31 26c2-1.500 4-1 5 1l3 7c.6 1.500-.5 3-2.500 5 3 6 7 9.500 12.500 12 2-2.500 3-4 5-3l7 3.500c2 1 1 4-1 6.500-3 3-7 4-12 2-12-4.500-19-12-21.500-21-1-5 1-10 4.500-13z" fill="#fff" />
        </g>
      </App84>

      <span className="ml-6 mr-[24px] mt-4 h-[98px] w-0.5 bg-white/25" />

      {/* Trash */}
      <App84>
        <path d="M5 6l10-8 8-4 7 3 6-6 8 6 8-5 8 7 8-2 9 9z" fill="#e6e4e2" />
        <path d="M8 8l10-10 6 8 8-12 6 12 8-8 7 7 8-8 9 11z" fill="#bcb8b8" />
        <path d="M34 2l8-3 3 5-7 3z" fill="#52b9dd" />
        <path d="M56 2l5 2-2 6-5-2z" fill="#b55a3b" />
        <path d="M5 4c2 10 72 10 74 0l-7 76c-1 10-59 10-60 0z" fill="url(#bin)" opacity=".95" />
        <path d="M16 14l6 68M68 14l-6 68M36 14v70M50 30c-4 10 2 30-4 50" stroke="#a6aaae" strokeWidth="3" opacity=".2" fill="none" />
        <path d="M5 4c2 10 72 10 74 0" fill="none" stroke="#9ca0a4" strokeWidth="1.500" />
      </App84>
    </nav>
  );
}

/* --------------------------------------------------------------------- app */

export default function App() {
  return (
    <div className="flex h-[1800px] w-[2880px] flex-col overflow-hidden bg-[linear-gradient(90deg,#0d0426_0%,#08021c_15%,#0b0424_35%,#120338_55%,#3c0a5c_66%,#490c68_70%,#2a0850_80%,#0f0232_90%,#15033c_100%)] font-['Inter',sans-serif]">
      <MenuBar />
      <main className="flex h-[1604px] shrink-0 flex-col overflow-hidden rounded-[22px] border-t-2 border-black">
        <TitleBar />
        <div className="flex min-h-0 flex-1 flex-col bg-[#f5f5f5] font-['Roboto',sans-serif]">
          <Toolbar />
          <div className="flex h-[1363px] shrink-0">
            <Sidebar />
            <Cards />
            <div className="ml-3 flex w-[2116px] flex-col">
              <Shelf
                label="Columns"
                pill="Contract Valid Until"
                icon={<path d="M1 0h4v4H1zM9 0h4v4H9zM17 0h4v4h-4zM1 6h4v18H1zM9 6h4v18H9zM17 6h4v18h-4z" />}
              />
              <Shelf
                className="mt-3"
                label="Rows"
                pill="CNT(download.csv)"
                icon={<path d="M0 2h4v4H0zM6 2h18v4H6zM0 10h4v4H0zM6 10h18v4H6zM0 18h4v4H0zM6 18h18v4H6z" />}
              />
              <Viz />
            </div>
          </div>
          <SheetTabs />
          <StatusBar />
        </div>
      </main>
      <Dock />
    </div>
  );
}
